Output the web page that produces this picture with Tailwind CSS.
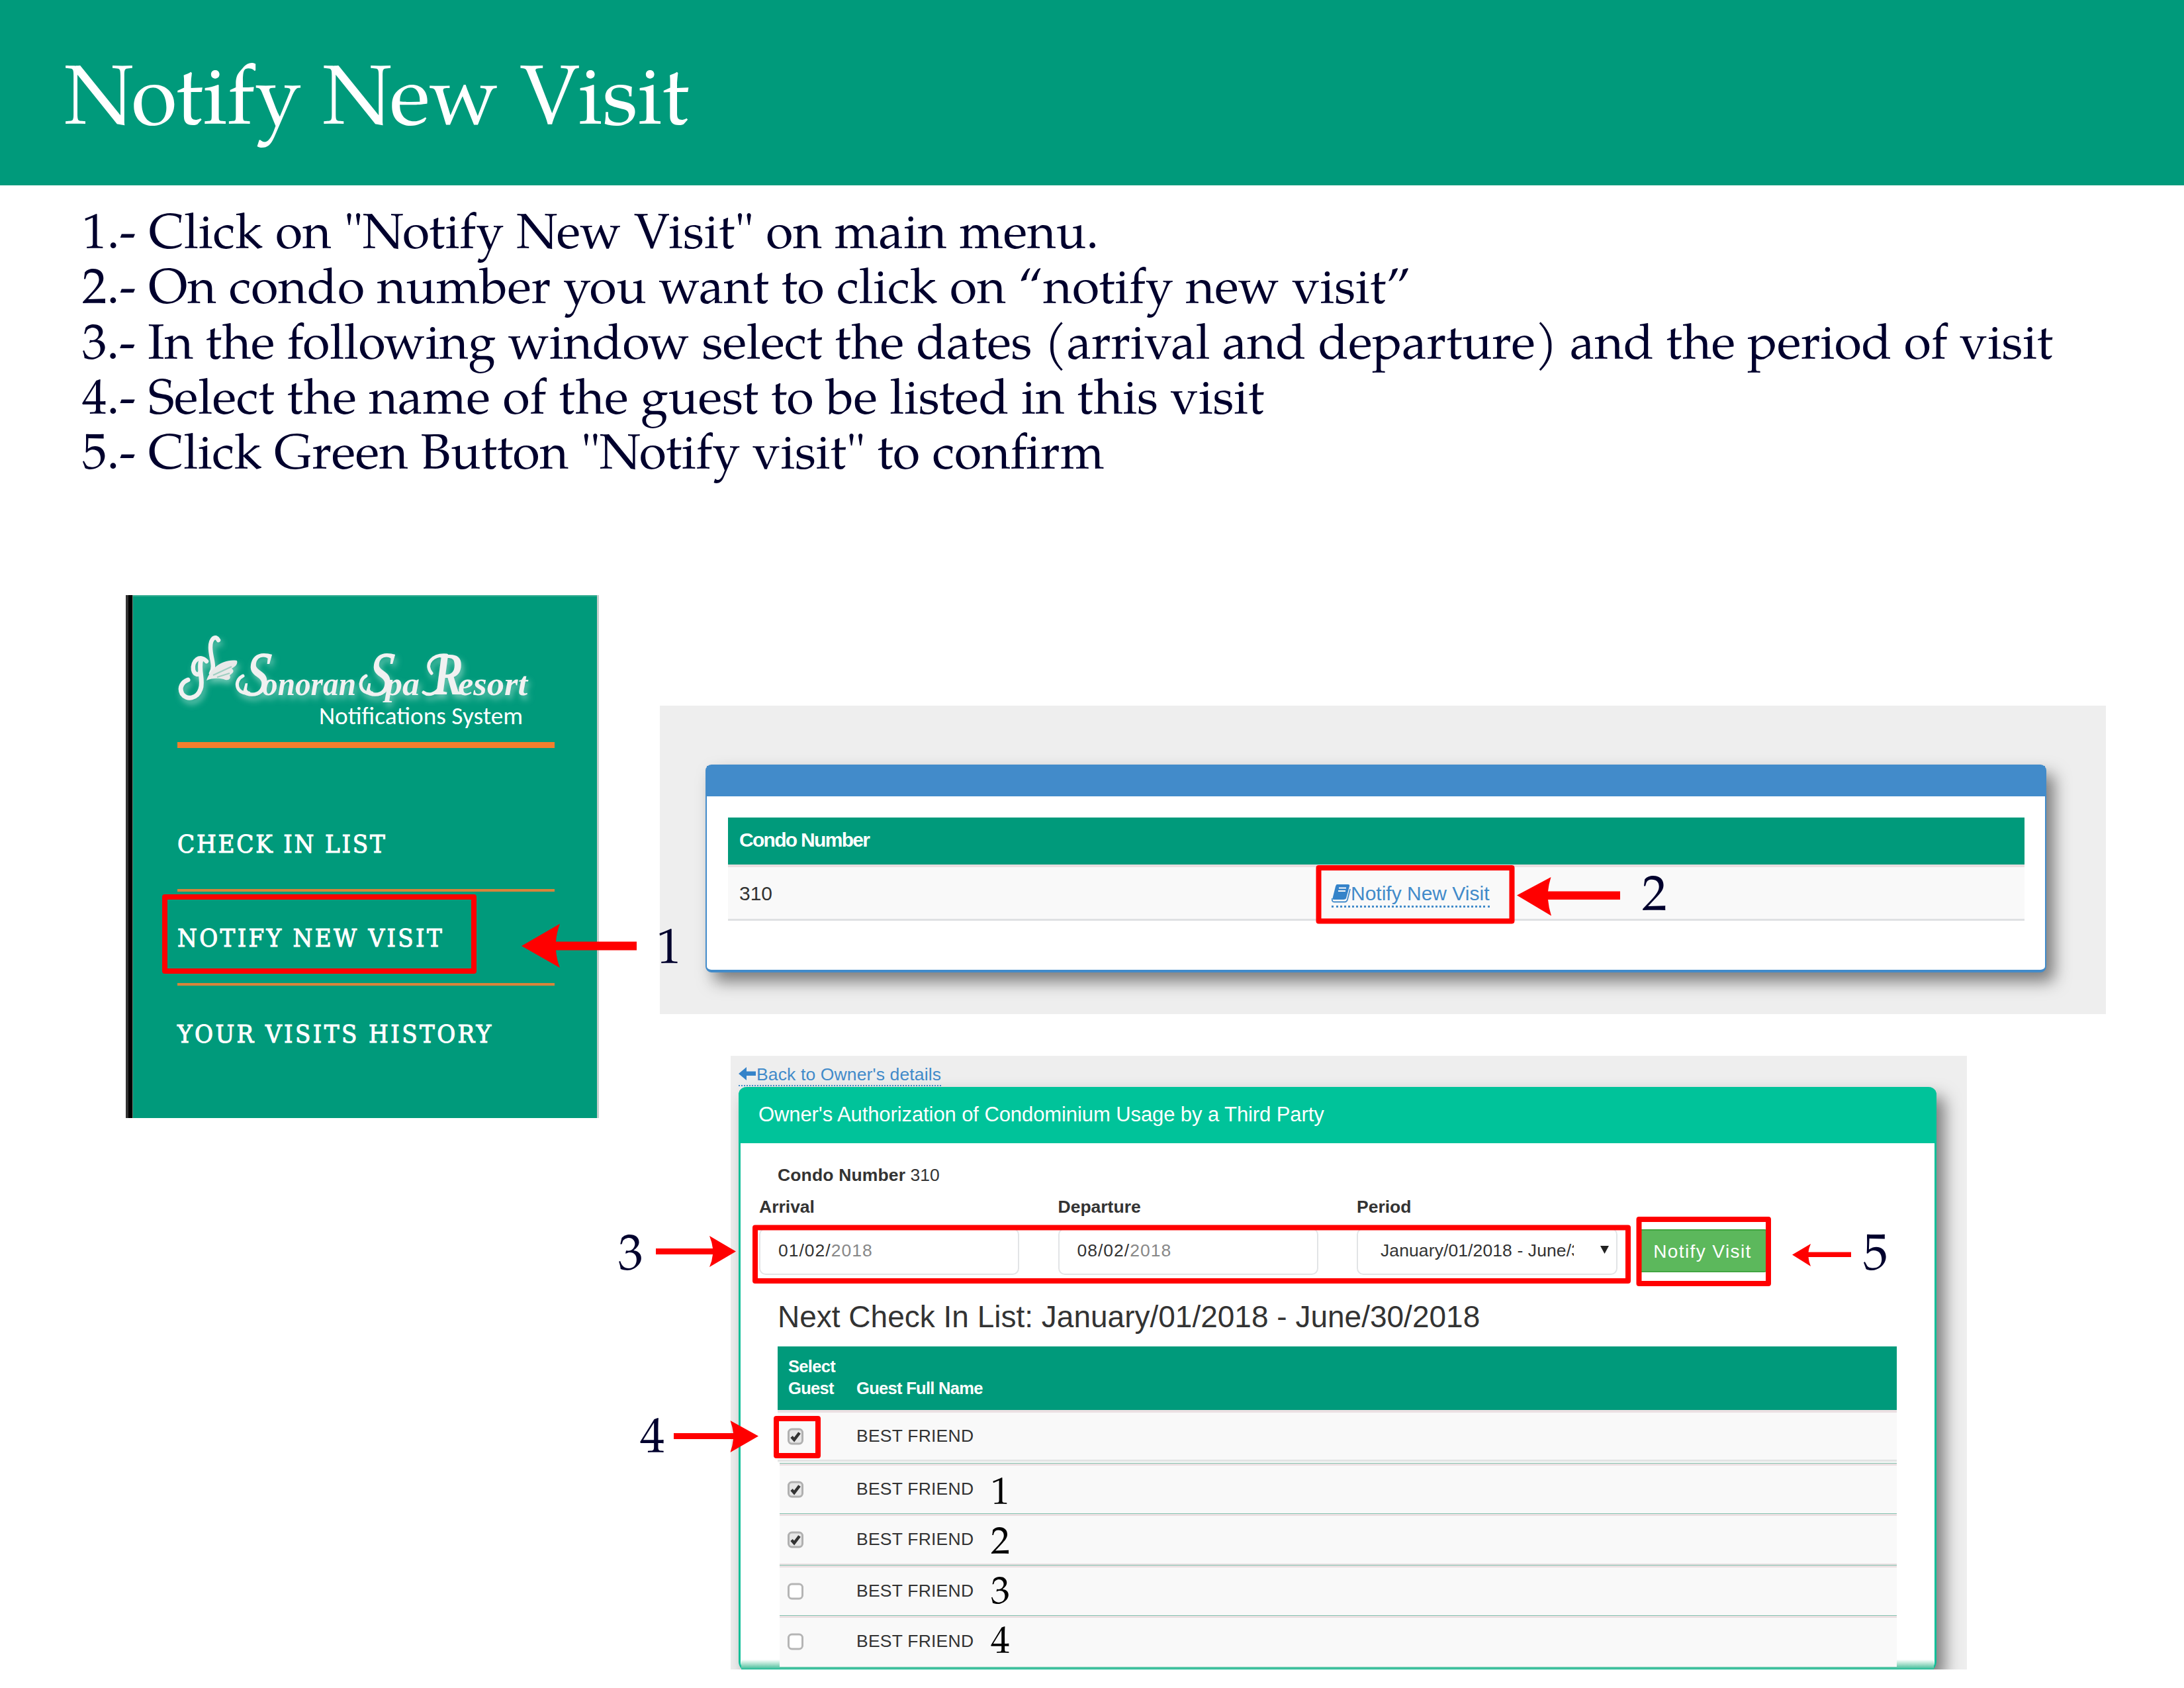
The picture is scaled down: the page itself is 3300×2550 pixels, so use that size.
<!DOCTYPE html>
<html lang="en">
<head>
<meta charset="utf-8">
<title>Notify New Visit</title>
<script src="https://cdn.jsdelivr.net/npm/@tailwindcss/browser@4"></script>
</head>
<body class="bg-white">
<div class="relative w-[3300px] h-[2550px] overflow-hidden font-['Liberation_Sans',sans-serif] text-[#333] whitespace-nowrap">

  <header class="h-[280px] bg-[#009a7b] flex items-center pl-[97px] pt-[38px]">
    <h1 class="font-['TeX_Gyre_Pagella','Liberation_Serif',serif] text-[126.5px] leading-[140px] text-white">Notify New Visit</h1>
  </header>

  <ol class="h-[619px] pt-[37px] pl-[124px] font-['TeX_Gyre_Pagella','Liberation_Serif',serif] text-[75px] leading-[83.25px] text-[#00002d]">
    <li class="tracking-[.17px]">1.- Click on "Notify New Visit" on main menu.</li>
    <li class="tracking-[.08px]">2.- On condo number you want to click on “notify new visit”</li>
    <li class="tracking-[-.17px]">3.- In the following window select the dates (arrival and departure) and the period of visit</li>
    <li>4.- Select the name of the guest to be listed in this visit</li>
    <li>5.- Click Green Button "Notify visit" to confirm</li>
  </ol>

  <main class="flex items-start pl-[190px]">
    <!-- Side menu -->
    <aside class="w-[715px] h-[790px] shrink-0 flex bg-[#009a7b] border-r-[3px] border-[#c9cfcd]">
      <div class="w-[11px] bg-black border-l-4 border-[#333] border-r border-r-[#6a8a7a]"></div>
      <div class="flex-1 border-t-2 border-[#3bb095] pl-[67px]">
        <svg class="block mt-[39px] h-[150px] w-[560px] overflow-visible" viewBox="268 940 560 150">
          <defs><filter id="glow" x="-10%" y="-20%" width="120%" height="150%"><feDropShadow dx="3" dy="6" stdDeviation="5" flood-color="#c9efe4" flood-opacity=".55"/></filter></defs>
          <g filter="url(#glow)">
            <g fill="none" stroke="#f1f1f1" stroke-width="6.5" stroke-linecap="round">
              <path d="M330 967C326 959 318 964 318 978C318 994 326 1006 319 1017"/>
              <path d="M312 999C302 988 290 998 292 1012C294 1020 300 1020 302 1016"/>
              <path d="M304 996C299 1012 308 1028 303 1041C298 1056 282 1058 275 1048C270 1038 276 1030 284 1027" stroke-width="7"/>
              <path d="M367 1021C353 1028 356 1049 376 1047" stroke-width="5"/>
              <path d="M553 1021C540 1028 543 1049 562 1047" stroke-width="5"/>
              <path d="M652 1017C640 1002 655 988 675 990M640 1046C648 1052 660 1048 666 1036" stroke-width="5"/>
            </g>
            <path d="M312 1028C318 1010 336 995 358 998C360 1004 354 1008 350 1010C356 1014 350 1018 347 1020C350 1026 344 1029 338 1026C330 1024 320 1024 312 1028Z" fill="#e9e9e9"/>
            <path d="M322 1020L350 1007M328 1023L347 1017" stroke="#9fcfc2" stroke-width="2"/>
            <g class="font-['Liberation_Serif',serif] font-bold italic" fill="#f1f1f1">
              <text transform="translate(366 1050) skewX(-8)" font-size="94" textLength="37" lengthAdjust="spacingAndGlyphs" class="font-normal" stroke="#f1f1f1" stroke-width="1.500">S</text>
              <text x="396" y="1050" font-size="50" textLength="142" lengthAdjust="spacingAndGlyphs">onoran</text>
              <text transform="translate(552 1050) skewX(-8)" font-size="94" textLength="37" lengthAdjust="spacingAndGlyphs" class="font-normal" stroke="#f1f1f1" stroke-width="1.500">S</text>
              <text x="582" y="1050" font-size="50" textLength="52" lengthAdjust="spacingAndGlyphs">pa</text>
              <text x="654" y="1049" font-size="92" textLength="46" lengthAdjust="spacingAndGlyphs" class="font-bold">R</text>
              <text x="692" y="1050" font-size="50" textLength="105" lengthAdjust="spacingAndGlyphs">esort</text>
            </g>
          </g>
          <text x="482" y="1094" font-size="37.3" fill="#fff" class="font-['Carlito','Open_Sans',sans-serif]">Notifications System</text>
        </svg>
        <div class="mt-[31px] h-[9px] w-[570px] bg-[#f37e2d]"></div>
        <nav class="w-[570px] font-['DejaVu_Serif_Condensed','DejaVu_Serif',serif] font-stretch-condensed text-[38px] leading-[48px] text-white [-webkit-text-stroke:1px_white]">
          <div class="h-[217px] pt-[121px] border-b-4 border-[#d8843a] tracking-[2.8px]">CHECK IN LIST</div>
          <div class="h-[142px] pt-[46px] border-b-4 border-[#d8843a] tracking-[3.3px]">NOTIFY NEW VISIT</div>
          <div class="pt-[49px] tracking-[3.4px]">YOUR VISITS HISTORY</div>
        </nav>
      </div>
    </aside>

    <div class="ml-[92px] pt-[167px]">
      <!-- Condo list -->
      <section class="w-[2185px] h-[466px] bg-[#eee] pl-[69px] pt-[89px] overflow-hidden">
        <div class="w-[2026px] h-[314px] rounded-[9px] border-2 border-b-4 border-[#428bca] bg-white shadow-[12px_14px_24px_#7c7c7c]">
          <div class="h-[46px] bg-[#428bca]"></div>
          <div class="mt-[32px] ml-[32px] mr-[31px]">
            <div class="h-[71px] bg-[#009a7b] pl-[17px] leading-[67px] text-[30px] font-bold text-white tracking-[-1.7px]">Condo Number</div>
            <div class="h-[85px] border-t-4 border-b-[3px] border-t-[#e9dfe0] border-b-[#dfe1e3] bg-[#f9f9f9] pl-[17px] flex text-[30px] leading-[80px]">
              <div class="w-[895px]">310</div>
              <a class="self-start mt-[21px] h-[40px] leading-[38px] text-[#428bca] flex border-b-[3px] border-dotted border-[#428bca]">
                <svg class="w-[29px] h-[29px] mt-[4px]" viewBox="0 0 29 29"><path d="M8 1H25Q28 1 27 4L22 22Q21 24 18 24H3Q1 24 2 20L6 4Q7 1 8 1Z" fill="#3583c9"/><path d="M11 6.500H22M10 11H21" stroke="#f9f9f9" stroke-width="2.200"/><path d="M1 22Q0 27.500 4 27.500H20Q23 27.500 24 24L28 8" fill="none" stroke="#428bca" stroke-width="1.800"/></svg>
                Notify New Visit
              </a>
            </div>
          </div>
        </div>
      </section>

      <!-- Authorization form -->
      <section class="mt-[63px] ml-[107px] w-[1868px] h-[927px] bg-[#eee] pl-[12px] pt-[12px] overflow-hidden">
        <a class="w-fit h-[34px] flex text-[26.5px] leading-[33px] text-[#428bca] border-b-[2px] border-dotted border-[#428bca] tracking-[.13px]">
          <svg class="w-[27px] h-[20px] mt-[5px]" viewBox="0 0 27 20"><path d="M0 10L12 0V6.500H26V13H12V20Z" fill="#3583c9"/></svg>
          Back to Owner's details
        </a>
        <div class="relative mt-[1px] w-[1810px] h-[884px] rounded-t-[12px] rounded-b-[16px] border-x-[3px] border-[#12bf98] bg-white shadow-[12px_14px_24px_#7c7c7c]">
          <div class="-mx-[3px] h-[85px] rounded-t-[12px] bg-[#00c39a] pl-[30px] leading-[84px] text-[31px] text-white tracking-[-.09px]">Owner's Authorization of Condominium Usage by a Third Party</div>
          <div class="pt-[33px] pl-[28px]">
            <p class="pl-[28px] text-[26.5px] leading-[31px]"><b class="tracking-[.15px]">Condo Number</b> 310</p>
            <div class="mt-[17px] flex text-[26.5px] leading-[31px]">
              <div class="w-[451.500px]">
                <b class="block">Arrival</b>
                <div class="mt-[16px] w-[393px] h-[71px] rounded-[10px] border-2 border-[#e2e4e6] pl-[27px] leading-[65px] tracking-[1px]">01/02/<span class="text-[#888]">2018</span></div>
              </div>
              <div class="w-[451.500px]">
                <b class="block">Departure</b>
                <div class="mt-[16px] w-[393px] h-[71px] rounded-[10px] border-2 border-[#e2e4e6] pl-[27px] leading-[65px] tracking-[1px]">08/02/<span class="text-[#888]">2018</span></div>
              </div>
              <div class="w-[424px]">
                <b class="block">Period</b>
                <div class="mt-[16px] w-[394px] h-[71px] rounded-[10px] border-2 border-[#e2e4e6] pl-[34px] pr-[11px] flex justify-between leading-[65px]">
                  <span class="w-[292px] overflow-hidden tracking-[.1px]">January/01/2018 - June/30/2018</span>
                  <svg class="w-[13px] h-[12px] mt-[25px]" viewBox="0 0 13 12"><path d="M0 0H13L6.500 12Z" fill="#222"/></svg>
                </div>
              </div>
              <div class="mt-[49px] w-[197px] h-[65px] bg-[#5cb85c] border-2 border-[#41a541] rounded-[5px] text-center text-[28px] leading-[63px] text-white tracking-[1.4px]">Notify Visit</div>
            </div>
            <h2 class="mt-[38px] pl-[28px] text-[46px] leading-[50px]">Next Check In List: January/01/2018 - June/30/2018</h2>
            <div class="ml-[28px] mt-[20px] w-[1691px]">
              <div class="h-[96px] bg-[#009a7b] pt-[14px] flex items-end pb-[16px] text-[25.5px] leading-[33px] font-bold text-white tracking-[-.7px]">
                <div class="w-[119px] pl-[16px]">Select<br>Guest</div>
                <div>Guest Full Name</div>
              </div>
              <div class="h-[80px] bg-[#f9f9f9] border-t-4 border-[#ebe0e2] text-[26.5px] tracking-[.23px]">
                <div class="h-[74px] border-b-[3px] border-[#e2e4e4] flex items-center"><span class="w-[119px] pl-[15px]"><svg class="w-[24px] h-[26px]"><use href="#on"/></svg></span>BEST FRIEND</div>
              </div>
              <div class="ml-[3px] text-[26.5px] tracking-[.23px] bg-[#f9f9f9]">
                <div class="h-[76px] border-t border-[#84c4b1]"><div class="h-[75px] border-t-[3px] border-[#ebe0e2] flex items-center pb-px"><span class="w-[116px] pl-[12px]"><svg class="w-[24px] h-[26px]"><use href="#on"/></svg></span>BEST FRIEND</div></div>
                <div class="h-[78px] border-t border-[#84c4b1]"><div class="h-[77px] border-t-[3px] border-b-2 border-[#ebe0e2] flex items-center pb-px"><span class="w-[116px] pl-[12px]"><svg class="w-[24px] h-[26px]"><use href="#on"/></svg></span>BEST FRIEND</div></div>
                <div class="h-[76px] border-t border-[#84c4b1]"><div class="h-[75px] border-t-[3px] border-[#ebe0e2] flex items-center pb-px"><span class="w-[116px] pl-[12px]"><svg class="w-[24px] h-[26px]"><use href="#off"/></svg></span>BEST FRIEND</div></div>
                <div class="h-[78px] border-t border-[#84c4b1] relative z-10 bg-[#f9f9f9]"><div class="h-[77px] border-t-[3px] border-[#ebe0e2] flex items-center pb-[3px]"><span class="w-[116px] pl-[12px]"><svg class="w-[24px] h-[26px]"><use href="#off"/></svg></span>BEST FRIEND</div></div>
              </div>
            </div>
          </div>
          <div class="absolute left-[1px] right-[1px] top-[865px] h-[15px] bg-linear-to-b from-white to-[#00b994]"></div>
        </div>
      </section>
    </div>
  </main>

  <!-- Callouts drawn over the captures -->
  <svg class="absolute inset-0 z-20 w-[3300px] h-[2550px]" viewBox="0 0 3300 2550">
    <defs>
      <g id="off"><rect x="1.500" y="2" width="21" height="22" rx="5" fill="#fff" stroke="#b5b5b5" stroke-width="3"/></g>
      <g id="on"><rect x="1.500" y="2" width="21" height="22" rx="5" fill="#e6e6e6" stroke="#b0b0b0" stroke-width="3"/><path d="M6 13.500L10 18L18 7.500" fill="none" stroke="#333" stroke-width="4.500"/></g>
    </defs>
    <g fill="none" stroke="#f00" stroke-width="8" stroke-linejoin="round">
      <rect x="249" y="1355" width="467" height="112"/>
      <rect x="1992.500" y="1311" width="292" height="80.500"/>
      <rect x="1141" y="1854.500" width="1319" height="80.500"/>
      <rect x="2476.500" y="1842" width="195.500" height="97"/>
      <rect x="1173" y="2143" width="63" height="56"/>
    </g>
    <g fill="#f00">
      <path d="M788 1429L846 1395.500Q841 1409 840 1422.500H962V1435.500H840Q841 1449 846 1462Z"/>
      <path d="M2292 1352.500L2343.500 1325Q2340 1336 2339 1346.500H2448V1359H2339Q2340 1371 2344 1383.500Z"/>
      <path d="M1112 1890.500L1072 1867Q1076 1877 1077 1886H991V1895H1077Q1076 1905 1072 1914Z"/>
      <path d="M1146 2169.500L1103.500 2146Q1107 2156 1108 2165H1018V2174H1108Q1107 2184 1103.500 2194Z"/>
      <path d="M2708 1895.500L2736 1879Q2733 1886 2732.500 1891.500H2797V1899H2732.500Q2733 1906 2736 1913Z"/>
    </g>
    <g fill="#00002d" font-size="75.500" class="font-['TeX_Gyre_Pagella','Liberation_Serif',serif]">
      <text x="992" y="1455">1</text>
      <text x="2481" y="1375">2</text>
      <text x="934" y="1917">3</text>
      <text x="967" y="2194">4</text>
      <text x="2815" y="1917">5</text>
    </g>
    <g fill="#000" font-size="58" class="font-['TeX_Gyre_Pagella','Liberation_Serif',serif]">
      <text x="1497" y="2272">1</text>
      <text x="1497" y="2347">2</text>
      <text x="1497" y="2422">3</text>
      <text x="1497" y="2497">4</text>
    </g>
  </svg>
</div>
</body>
</html>
